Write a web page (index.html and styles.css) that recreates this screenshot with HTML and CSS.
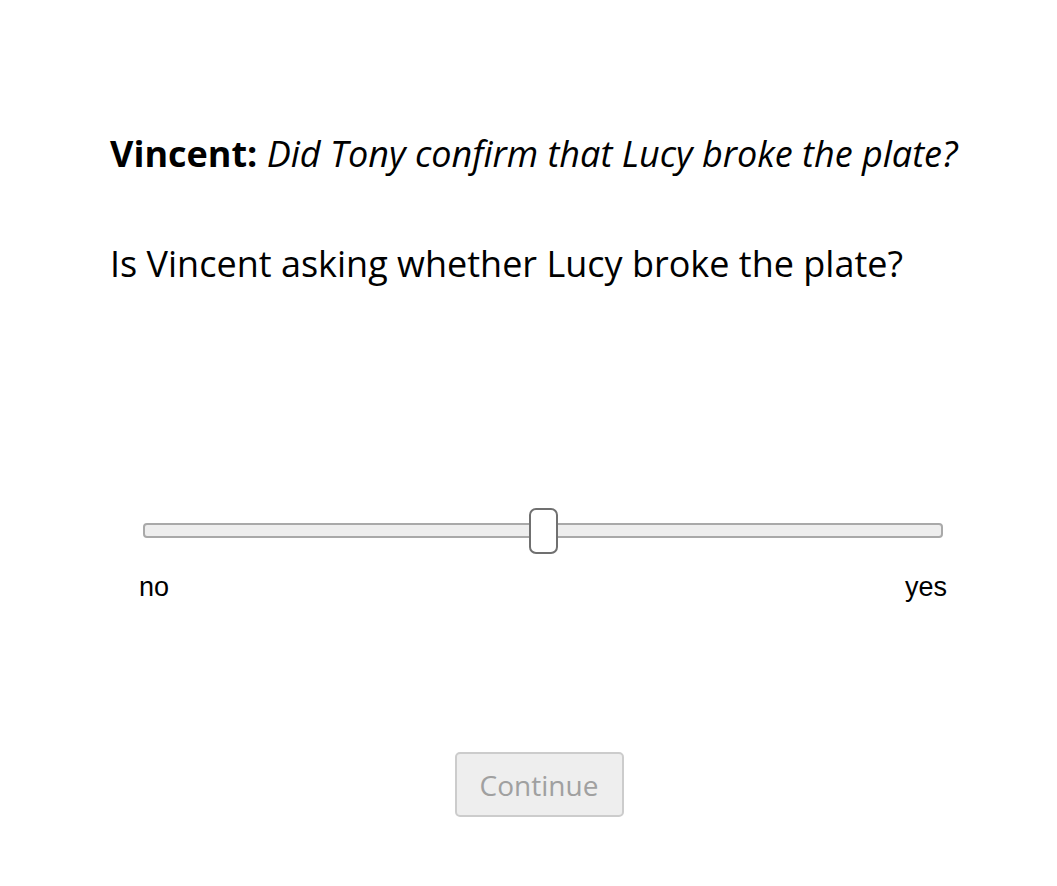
FILE: index.html
```html
<!DOCTYPE html>
<html>
<head>
<meta charset="utf-8">
<link rel="stylesheet" href="styles.css">
</head>
<body>
<main class="page">
  <p class="utterance"><strong>Vincent:</strong> <em>Did Tony confirm that Lucy broke the plate?</em></p>
  <p class="question">Is Vincent asking whether Lucy broke the plate?</p>
  <div class="slider-block">
    <input class="slider" type="range" min="0" max="100" value="50">
    <div class="labels"><span>no</span><span>yes</span></div>
  </div>
  <div class="actions"><button class="continue" disabled>Continue</button></div>
</main>
</body>
</html>
```
FILE: styles.css
```css
html, body { margin: 0; padding: 0; background: #fff; }
body { font-family: "Open Sans", sans-serif; color: #000; }
.page { padding: 128px 0 0 110px; width: 880px; }
.utterance { margin: 0; font-size: 36px; line-height: 52px; }
.utterance strong { font-weight: 700; }
.question { margin: 58px 0 0; font-size: 36px; line-height: 52px; }
.slider-block { margin: 217px 0 0 33px; width: 800px; }
.slider { -webkit-appearance: none; appearance: none; display: block; width: 800px; height: 46px; margin: 0; background: transparent; }
.slider::-webkit-slider-runnable-track { height: 15px; background: #eee; border: 2px solid #a9a9a9; border-radius: 4px; box-sizing: border-box; }
.slider::-webkit-slider-thumb { -webkit-appearance: none; width: 29px; height: 46px; margin-top: -17px; background: #fff; border: 2px solid #707070; border-radius: 7px; box-sizing: border-box; }
.labels { display: flex; justify-content: space-between; margin: 17px -4px 0 -4px; font-family: "Liberation Sans", Arial, sans-serif; font-size: 27px; line-height: 34px; }
.actions { display: flex; justify-content: center; margin: 148px 0 0 0; width: 858px; }
.continue { box-sizing: border-box; width: 169px; height: 65px; font-family: "Open Sans", sans-serif; font-size: 28px; color: #a0a0a0; background: #eee; border: 2px solid #ccc; border-radius: 5px; padding: 0; }
```
